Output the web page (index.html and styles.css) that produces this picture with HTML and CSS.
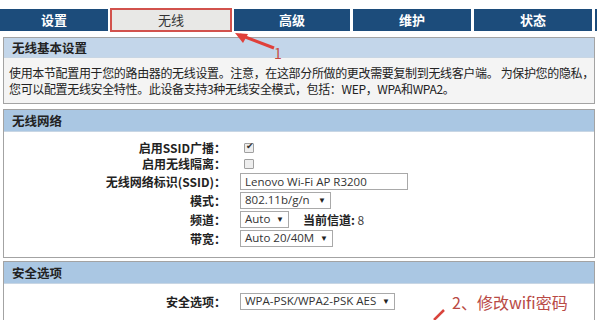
FILE: index.html
```html
<!DOCTYPE html>
<html lang="zh-CN">
<head>
  <meta charset="UTF-8" />
  <meta name="viewport" content="width=device-width, initial-scale=1.0"/>
  <title>无线设置</title>
  <link rel="stylesheet" href="styles.css">
</head>
<body>

  <div class="nav">
    <div class="tab w108">设置</div>
    <div class="tab active">无线</div>
    <div class="tab w116">高级</div>
    <div class="tab w118">维护</div>
    <div class="tab w118">状态</div>
    <div class="tab rest"></div>
  </div>

  <div class="panel">
    <div class="panel-head light">无线基本设置</div>
    <div class="panel-body gray">
      <p>使用本节配置用于您的路由器的无线设置。注意，在这部分所做的更改需要复制到无线客户端。 为保护您的隐私，<br>您可以配置无线安全特性。此设备支持3种无线安全模式，包括：WEP，WPA和WPA2。</p>
    </div>
  </div>

  <div class="panel">
    <div class="panel-head">无线网络</div>
    <div class="panel-body form">
      <div class="row short">
        <label>启用SSID广播：</label>
        <input type="checkbox" checked>
      </div>
      <div class="row short">
        <label>启用无线隔离：</label>
        <input type="checkbox">
      </div>
      <div class="row">
        <label>无线网络标识(SSID)：</label>
        <input type="text" class="text" value="Lenovo Wi-Fi AP R3200">
      </div>
      <div class="row">
        <label>模式：</label>
        <div class="select w90">802.11b/g/n <span class="arrow">▼</span></div>
      </div>
      <div class="row">
        <label>频道：</label>
        <div class="field">
          <div class="select w48">Auto <span class="arrow">▼</span></div>
          <span class="info"><b>当前信道:</b> 8</span>
        </div>
      </div>
      <div class="row">
        <label>带宽：</label>
        <div class="select w92">Auto 20/40M <span class="arrow">▼</span></div>
      </div>
    </div>
  </div>

  <div class="panel">
    <div class="panel-head">安全选项</div>
    <div class="panel-body form">
      <div class="row">
        <label>安全选项：</label>
        <div class="select w154">WPA-PSK/WPA2-PSK AES <span class="arrow">▼</span></div>
      </div>
    </div>
  </div>

  <!-- 标注 -->
  <svg class="mark mark1" width="60" height="40" viewBox="0 0 60 40">
    <path d="M40 16 L6 3" stroke="#e0403a" stroke-width="3" fill="none"/>
    <path d="M1 1 L14 2 L9 11 Z" fill="#e0403a"/>
  </svg>
  <span class="note one">1</span>
  <span class="note two">2、修改wifi密码</span>
  <svg class="mark mark2" width="20" height="14" viewBox="0 0 20 14">
    <path d="M16 2 L6 12" stroke="#d9443c" stroke-width="2.5" fill="none"/>
  </svg>

</body>
</html>
```

FILE: styles.css
```css
body {
  margin: 0;
  background-color: #fff;
  color: #222;
  font-family: "Noto Sans CJK SC", "Noto Sans", sans-serif;
  font-size: 12px;
  position: relative;
  width: 597px;
  height: 320px;
  overflow: hidden;
}

.nav {
  display: flex;
  align-items: center;
  height: 24px;
  margin-top: 8px;
  gap: 2px;
}

.tab {
  height: 22px;
  line-height: 22px;
  background-color: #1c4c7b;
  color: #fff;
  font-weight: bold;
  font-size: 13px;
  text-align: center;
  box-sizing: border-box;
}

.w108 { width: 108px; }
.w116 { width: 116px; margin-right: 1px; }
.w118 { width: 118px; margin-right: 1px; }
.rest { flex: 1; }

.tab.active {
  width: 122px;
  height: 24px;
  line-height: 20px;
  background-color: #e8e8e6;
  color: #333;
  font-weight: normal;
  border: 2px solid #d2524c;
}

.panel {
  margin: 5px 2px 0 3px;
  border: 1px solid #a3a3a3;
}

.panel + .panel + .panel {
  margin-top: 3px;
}

.panel-head {
  height: 21px;
  line-height: 21px;
  padding-left: 8px;
  background-color: #aac7e3;
  font-weight: bold;
  font-size: 12.5px;
  border-bottom: 1px solid #c8d6e4;
}

.panel-head.light {
  background-color: #c3d6ea;
  height: 19px;
  line-height: 19px;
}

.panel-body.gray {
  background-color: #f4f4f4;
  padding: 7px 5px 6px;
}

.panel-body p {
  margin: 0;
  line-height: 16px;
  white-space: nowrap;
  letter-spacing: -0.35px;
}

.form {
  padding: 8px 0 9px;
}

.row {
  display: grid;
  grid-template-columns: 222px auto;
  column-gap: 14px;
  align-items: center;
  height: 19px;
  line-height: 16px;
}

.row.short {
  height: 16px;
  line-height: 16px;
}

.row label {
  text-align: right;
  font-weight: bold;
}

input[type="checkbox"] {
  appearance: none;
  margin: 0 0 0 4px;
  width: 10px;
  height: 10px;
  border: 1px solid #a0a0a0;
  border-radius: 1px;
  background-color: #eee;
  position: relative;
}

input[type="checkbox"]:checked::after {
  content: "✔";
  position: absolute;
  left: 1px;
  top: -3px;
  font-size: 9px;
  color: #333;
}

.text {
  width: 168px;
  height: 17px;
  box-sizing: border-box;
  border: 1px solid #a9a9a9;
  padding: 0 4px;
  font-family: "Open Sans", "Noto Sans", sans-serif;
  font-size: 11.5px;
  color: #333;
}

.field {
  display: flex;
  align-items: center;
}

.select {
  height: 15px;
  line-height: 14px;
  border: 1px solid #a9a9a9;
  padding: 0 4px;
  font-family: "Open Sans", "Noto Sans", sans-serif;
  font-size: 11.5px;
  color: #333;
  background-color: #fff;
  display: flex;
  justify-content: space-between;
  box-sizing: content-box;
}

.w48 { width: 39px; }
.w90 { width: 81px; }
.w92 { width: 83px; }
.w154 { width: 145px; }

.arrow {
  font-size: 8px;
  color: #222;
}

.info {
  margin-left: 14px;
  color: #444;
}

.info b {
  color: #222;
}

.mark {
  position: absolute;
}

.mark1 {
  left: 234px;
  top: 32px;
}

.mark2 {
  left: 428px;
  top: 308px;
}

.note {
  position: absolute;
  color: #c94a43;
}

.note.one {
  left: 274px;
  top: 45px;
  font-size: 14px;
  line-height: 16px;
}

.note.two {
  left: 452px;
  top: 290px;
  font-size: 16px;
  color: #b94a45;
}
```
